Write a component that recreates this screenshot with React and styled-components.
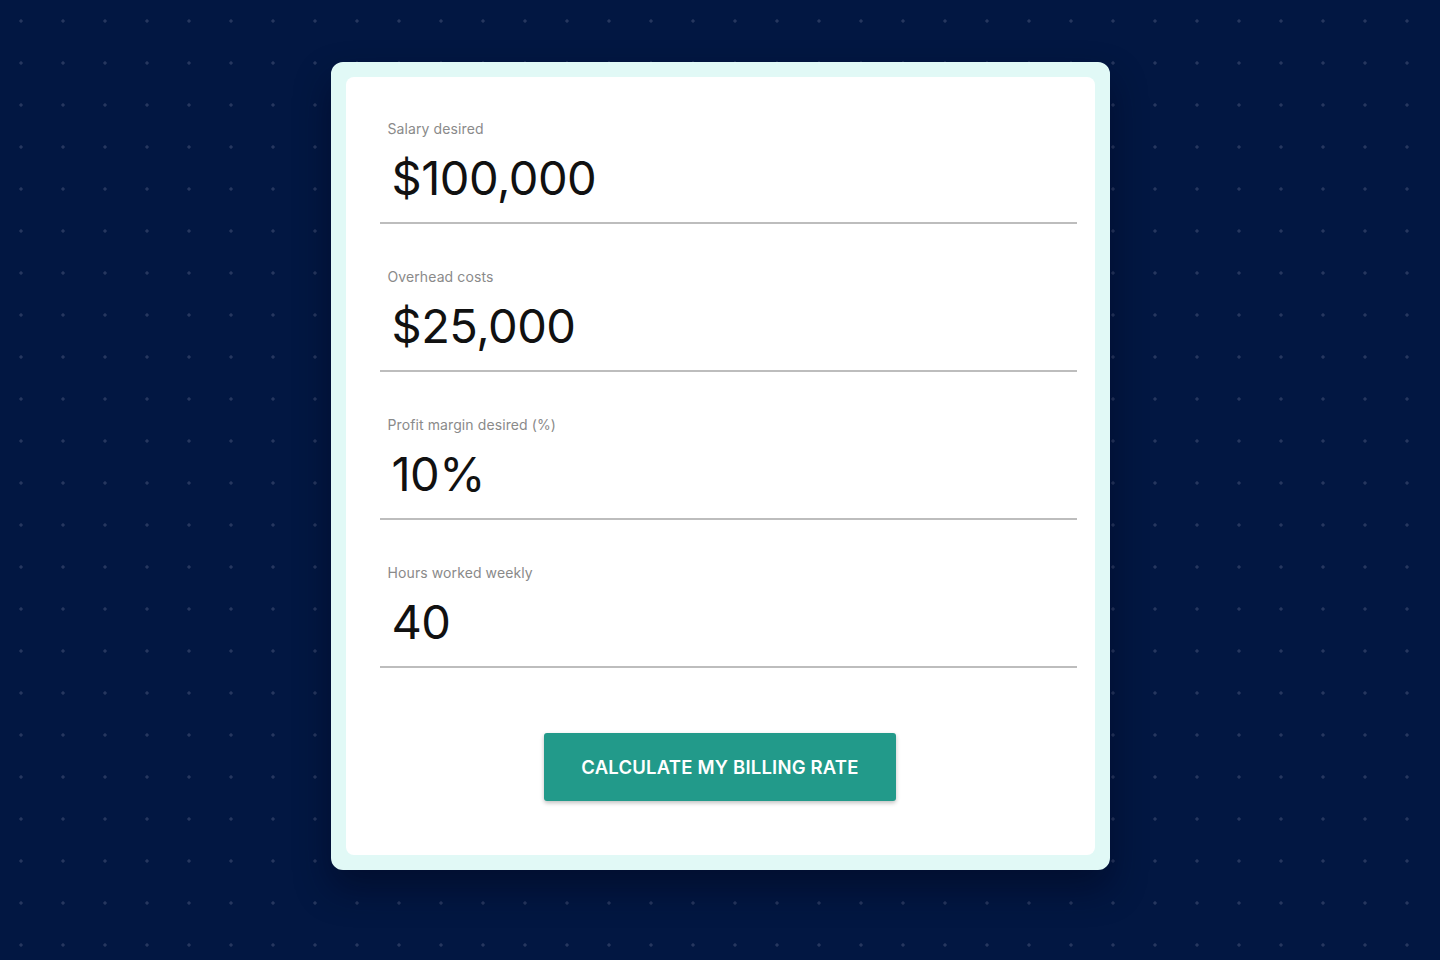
import React from "react";
import styled, { createGlobalStyle } from "styled-components";

const Global = createGlobalStyle`
  html, body { margin: 0; padding: 0; }
  body {
    min-height: 960px;
    background-color: #021742;
    background-image: radial-gradient(circle at center, #26375f 0, #26375f 1.3px, transparent 2px);
    background-size: 42px 42px;
    font-family: Inter, "Noto Sans", sans-serif;
  }
`;

const Page = styled.div`
  display: flex;
  justify-content: center;
  padding: 62px 0 0 0;
  min-height: 960px;
  box-sizing: border-box;
`;

const Card = styled.div`
  width: 779px;
  height: 808px;
  box-sizing: border-box;
  border: 15px solid #e1f9f6;
  border-radius: 12px;
  background: #e1f9f6;
  box-shadow: 0 18px 36px rgba(0, 5, 25, 0.45);
`;

const Panel = styled.div`
  height: 100%;
  background: #ffffff;
  border-radius: 8px;
  padding: 0 18px 0 34px;
  box-sizing: border-box;
  display: flex;
  flex-direction: column;
`;

const Field = styled.div`
  height: 148px;
  box-sizing: border-box;
  padding: 43px 0 0 8px;
  border-bottom: 2px solid #bdbdbd;
  display: flex;
  flex-direction: column;

  &:first-child {
    height: 147px;
    padding-top: 42px;
  }
`;

const Label = styled.div`
  font-size: 14px;
  line-height: 20px;
  color: #8a8a8a;
  letter-spacing: 0.1px;
`;

const Value = styled.div`
  margin-top: 11px;
  padding-left: 4px;
  font-size: 47px;
  line-height: 56px;
  color: #111111;
  letter-spacing: -0.5px;
`;

const ButtonRow = styled.div`
  display: flex;
  justify-content: center;
  padding: 65px 16px 0 0;
`;

const Button = styled.button`
  width: 352px;
  height: 68px;
  border: none;
  border-radius: 3px;
  background: #229a8a;
  color: #ffffff;
  font-family: Inter, "Noto Sans", sans-serif;
  font-size: 18.5px;
  font-weight: 600;
  letter-spacing: 0.2px;
  text-transform: uppercase;
  box-shadow: 0 2px 4px rgba(0, 0, 0, 0.25);
  cursor: pointer;
`;

const fields = [
  { label: "Salary desired", value: "$100,000" },
  { label: "Overhead costs", value: "$25,000" },
  { label: "Profit margin desired (%)", value: "10%" },
  { label: "Hours worked weekly", value: "40" },
];

export default function App() {
  return (
    <>
      <Global />
      <Page>
        <Card>
          <Panel>
            {fields.map((f) => (
              <Field key={f.label}>
                <Label>{f.label}</Label>
                <Value>{f.value}</Value>
              </Field>
            ))}
            <ButtonRow>
              <Button>Calculate my billing rate</Button>
            </ButtonRow>
          </Panel>
        </Card>
      </Page>
    </>
  );
}
